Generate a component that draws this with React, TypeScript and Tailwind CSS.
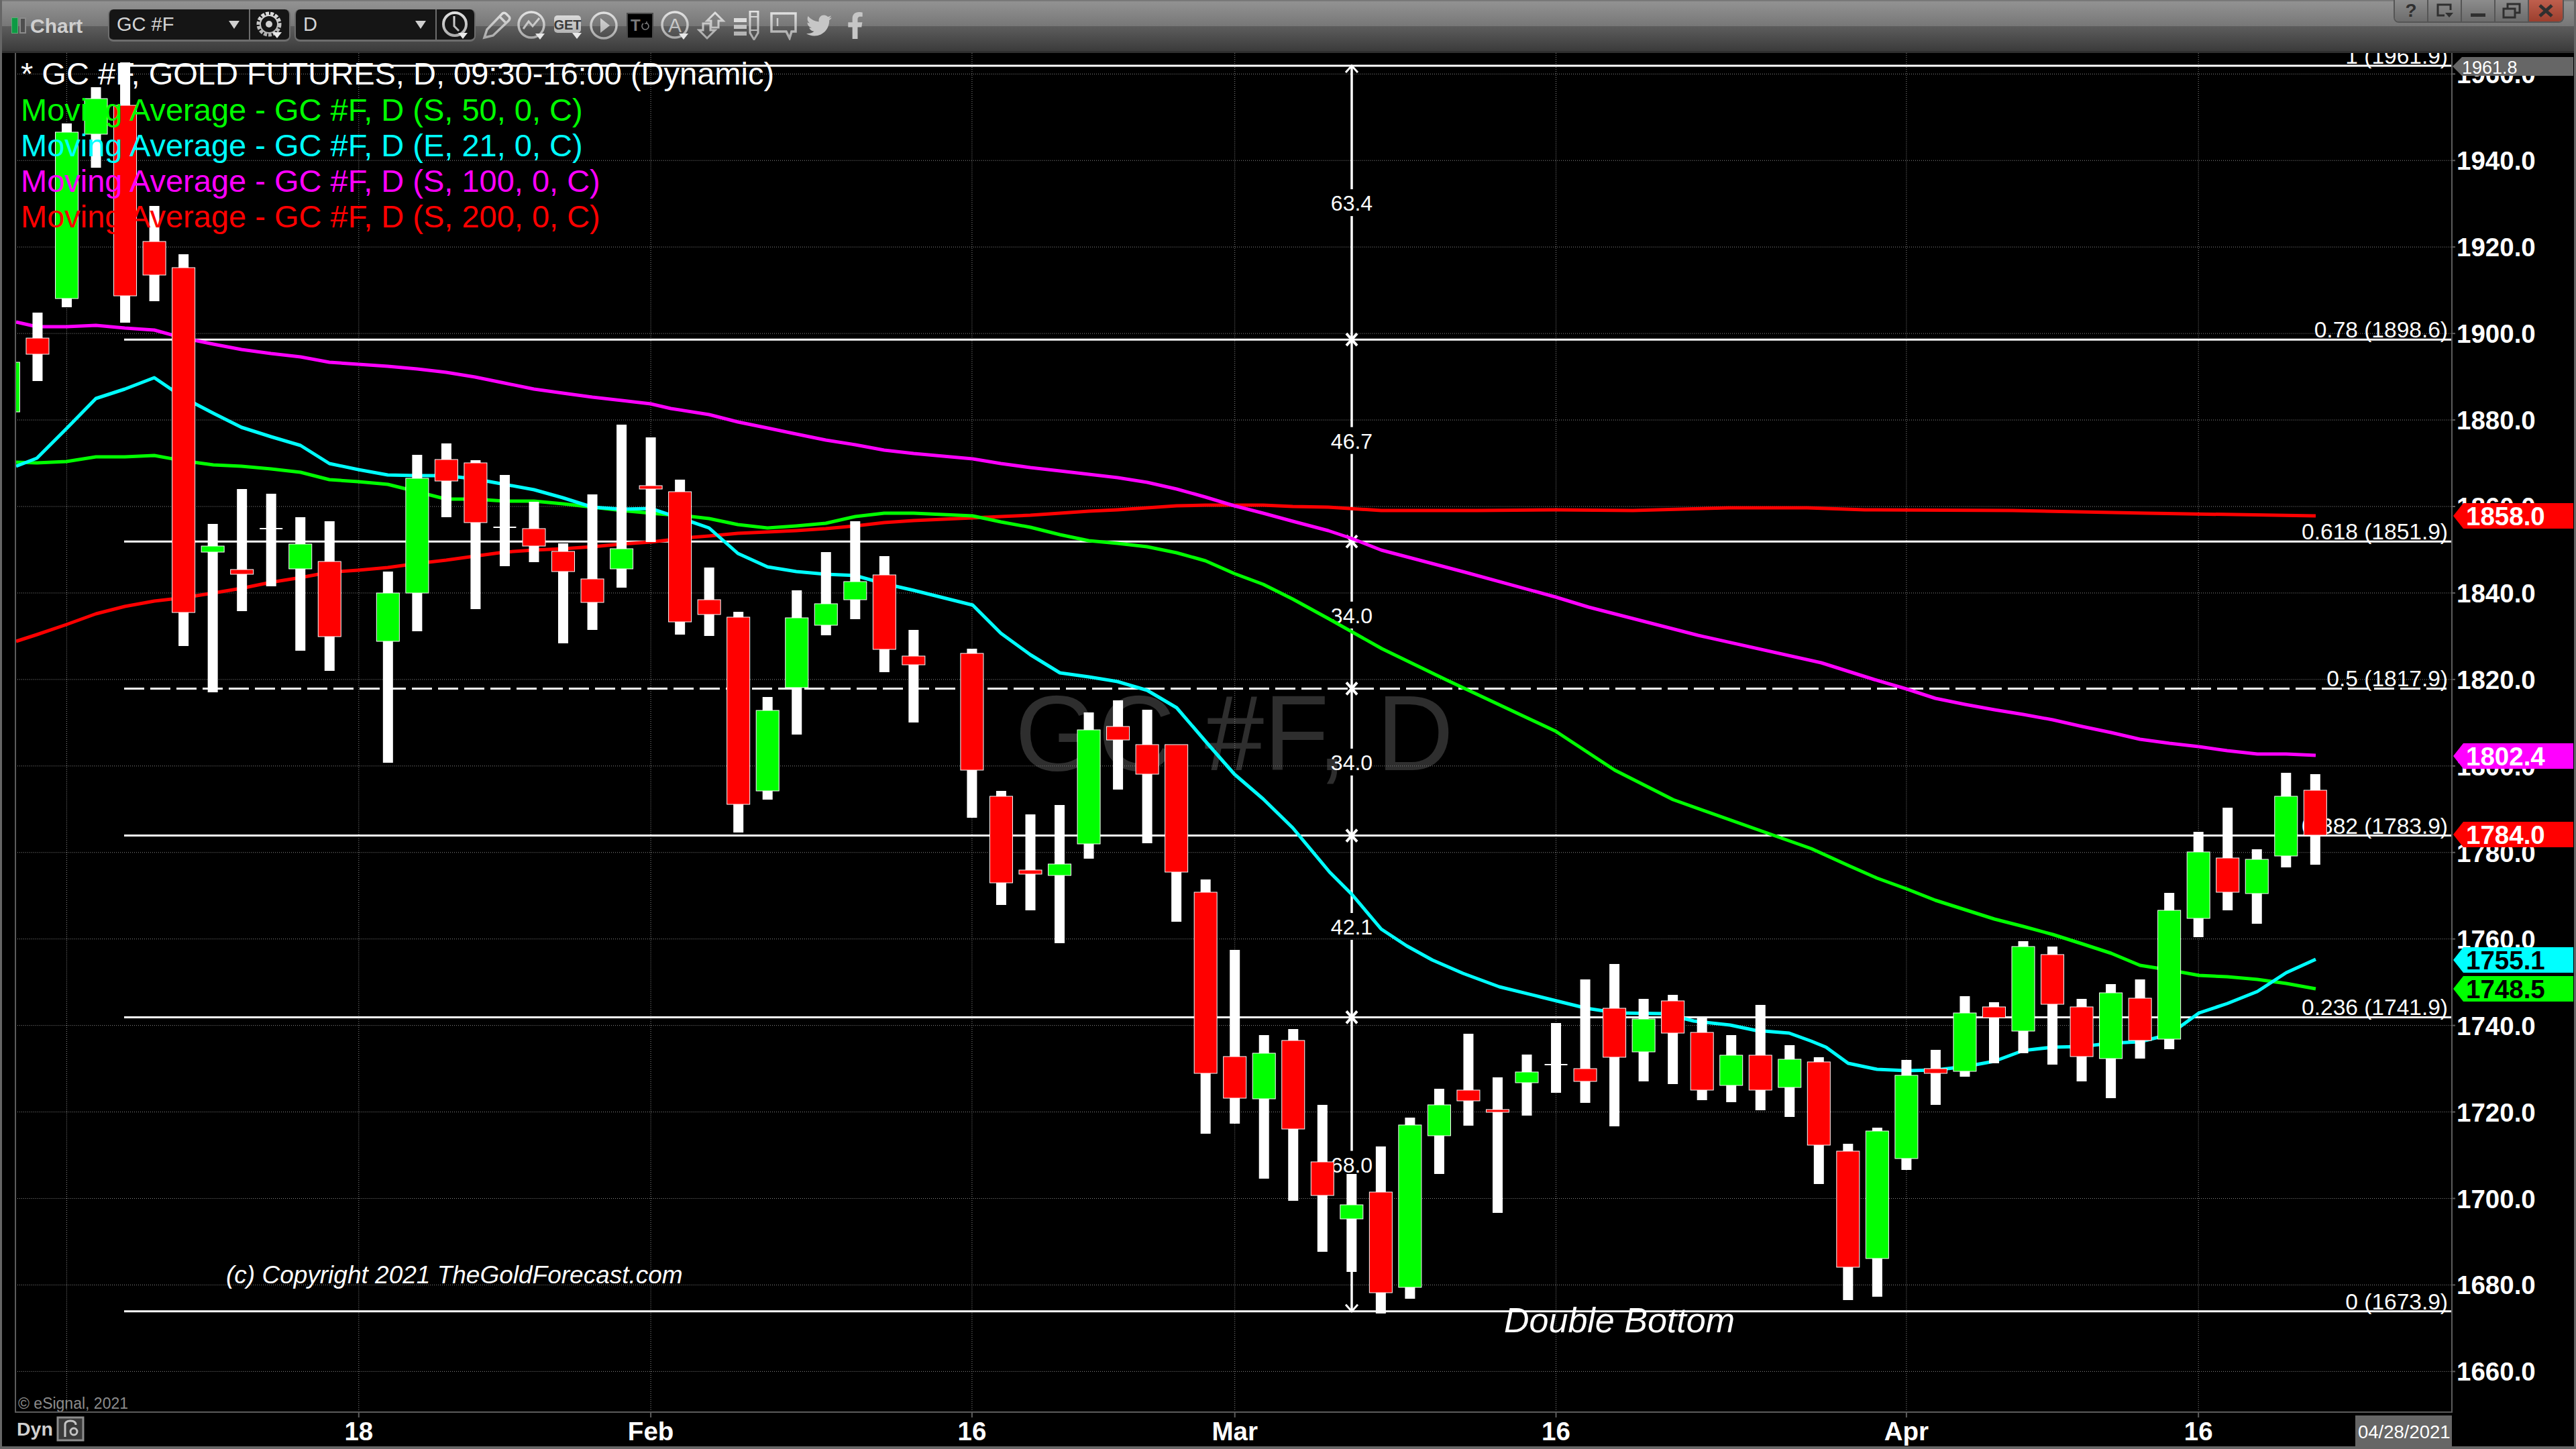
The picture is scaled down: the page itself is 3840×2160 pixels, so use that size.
import { FaFacebookF, FaTwitter } from "react-icons/fa";

// price / bar index to screen pixels (the svg viewBox below is in page coordinates)
const yOf = (p: number) => 110.3 + (1960 - p) * 6.447;
const xOf = (k: number) => 99.5 + 43.53 * k;

const PLOT = { left: 23, right: 3655, top: 79, bottom: 2105 };
const FIB_X = 2015;

type Bar = [number, number, number, number, number, "r" | "g" | "d"];

// k, high, body top, body bottom, low, kind (pixels)
const bars: Bar[] = [
  [-2, 520, 540, 614, 640, "g"],
  [-1, 466, 504, 528, 568, "r"],
  [0, 184, 197, 445, 458, "g"],
  [1, 130, 147, 200, 250, "g"],
  [2, 93, 157, 441, 481, "r"],
  [3, 307, 360, 410, 449, "r"],
  [4, 379, 399, 913, 963, "r"],
  [5, 781, 814, 823, 1032, "g"],
  [6, 729, 849, 856, 911, "r"],
  [7, 736, 788, 788, 874, "d"],
  [8, 771, 811, 848, 970, "g"],
  [9, 777, 837, 949, 1000, "r"],
  [11, 852, 884, 956, 1137, "g"],
  [12, 678, 713, 884, 941, "g"],
  [13, 661, 685, 717, 771, "r"],
  [14, 686, 690, 779, 908, "r"],
  [15, 708, 786, 786, 844, "d"],
  [16, 748, 788, 814, 838, "r"],
  [17, 810, 822, 852, 959, "r"],
  [18, 737, 863, 898, 939, "r"],
  [19, 633, 818, 848, 876, "g"],
  [20, 652, 724, 729, 808, "r"],
  [21, 715, 733, 927, 946, "r"],
  [22, 846, 894, 916, 948, "r"],
  [23, 912, 920, 1199, 1241, "r"],
  [24, 1039, 1059, 1179, 1192, "g"],
  [25, 880, 921, 1025, 1095, "g"],
  [26, 823, 900, 932, 947, "g"],
  [27, 777, 867, 894, 923, "g"],
  [28, 829, 857, 968, 1002, "r"],
  [29, 939, 978, 991, 1077, "r"],
  [31, 967, 974, 1148, 1219, "r"],
  [32, 1179, 1187, 1316, 1349, "r"],
  [33, 1214, 1297, 1303, 1357, "r"],
  [34, 1200, 1288, 1305, 1406, "g"],
  [35, 1062, 1088, 1258, 1280, "g"],
  [36, 1044, 1083, 1103, 1177, "r"],
  [37, 1058, 1110, 1154, 1257, "r"],
  [38, 1110, 1110, 1300, 1374, "r"],
  [39, 1311, 1330, 1600, 1690, "r"],
  [40, 1416, 1575, 1637, 1675, "r"],
  [41, 1543, 1570, 1638, 1757, "g"],
  [42, 1534, 1551, 1683, 1790, "r"],
  [43, 1647, 1732, 1782, 1866, "r"],
  [44, 1750, 1796, 1817, 1896, "g"],
  [45, 1709, 1777, 1927, 1958, "r"],
  [46, 1666, 1677, 1919, 1936, "g"],
  [47, 1623, 1647, 1693, 1750, "g"],
  [48, 1541, 1625, 1641, 1678, "r"],
  [49, 1606, 1654, 1658, 1808, "r"],
  [50, 1572, 1598, 1614, 1663, "g"],
  [51, 1525, 1587, 1587, 1629, "d"],
  [52, 1460, 1593, 1612, 1644, "r"],
  [53, 1437, 1503, 1576, 1679, "r"],
  [54, 1489, 1519, 1568, 1612, "g"],
  [55, 1483, 1492, 1540, 1616, "r"],
  [56, 1517, 1539, 1625, 1640, "r"],
  [57, 1543, 1573, 1618, 1643, "g"],
  [58, 1498, 1573, 1625, 1655, "r"],
  [59, 1558, 1579, 1621, 1665, "g"],
  [60, 1576, 1583, 1707, 1765, "r"],
  [61, 1705, 1716, 1889, 1938, "r"],
  [62, 1681, 1686, 1876, 1933, "g"],
  [63, 1580, 1603, 1727, 1744, "g"],
  [64, 1565, 1593, 1600, 1647, "r"],
  [65, 1485, 1510, 1597, 1605, "g"],
  [66, 1494, 1501, 1517, 1585, "r"],
  [67, 1403, 1411, 1537, 1570, "g"],
  [68, 1411, 1423, 1497, 1587, "r"],
  [69, 1489, 1501, 1575, 1612, "r"],
  [70, 1467, 1480, 1578, 1637, "g"],
  [71, 1460, 1488, 1551, 1578, "r"],
  [72, 1331, 1357, 1549, 1564, "g"],
  [73, 1240, 1270, 1369, 1397, "g"],
  [74, 1204, 1279, 1330, 1357, "r"],
  [75, 1266, 1281, 1332, 1377, "g"],
  [76, 1152, 1187, 1276, 1293, "g"],
  [77, 1154, 1178, 1245, 1289, "r"],
];

const magentaLine =
  "24,480 55,487 99,487 143,485 186,489 230,492 274,504 318,513 360,521 404,527 448,532 491,540 534,543 578,546 622,550 665,555 708,562 752,571 796,580 839,586 883,592 927,597 970,602 1000,609 1057,618 1100,629 1144,638 1187,647 1231,656 1275,663 1318,671 1362,676 1406,680 1450,684 1492,691 1536,697 1580,702 1623,707 1666,712 1710,719 1754,729 1797,741 1840,754 1883,765 1927,777 1980,791 2016,803 2059,820 2184,853 2319,890 2368,905 2531,947 2715,988 2794,1013 2842,1027 2885,1041 2929,1050 2973,1058 3016,1065 3060,1073 3104,1083 3147,1092 3190,1102 3234,1108 3278,1113 3320,1119 3365,1124 3408,1124 3452,1126";
const redLine =
  "24,956 55,946 99,931 143,915 186,904 230,896 274,891 318,884 360,877 404,868 448,861 491,853 534,850 578,846 622,840 665,835 708,829 752,823 796,820 839,818 883,815 927,811 970,808 1031,801 1057,799 1100,795 1144,793 1187,791 1231,788 1275,784 1318,779 1362,776 1406,774 1450,772 1492,770 1536,768 1580,765 1623,762 1666,760 1710,757 1754,754 1797,753 1883,753 1927,755 1980,756 2059,761 2202,761 2319,760 2434,761 2577,757 2694,757 2780,760 3000,761 3200,765 3452,769";
const greenLine =
  "24,689 55,690 99,688 143,681 186,681 230,679 274,687 318,693 360,695 404,699 448,704 491,715 534,718 578,722 622,733 665,744 708,744 752,747 796,747 839,751 883,756 927,761 970,765 1031,770 1057,773 1100,782 1144,787 1187,784 1231,780 1275,770 1318,765 1362,765 1406,767 1450,769 1492,778 1536,786 1580,797 1623,806 1666,810 1710,815 1754,824 1797,836 1840,855 1883,871 1927,893 1980,922 2060,967 2155,1013 2319,1090 2407,1148 2494,1192 2649,1247 2700,1265 2755,1290 2798,1309 2842,1325 2885,1342 2929,1356 2973,1370 3016,1381 3060,1393 3104,1407 3147,1421 3190,1439 3234,1446 3278,1454 3320,1456 3365,1460 3408,1466 3452,1474";
const cyanLine =
  "24,695 55,683 99,639 143,594 186,580 230,563 274,593 318,616 360,637 404,651 448,664 491,691 534,700 578,708 622,709 665,709 708,714 752,722 796,730 839,742 883,756 927,759 970,758 1031,778 1057,787 1100,825 1144,845 1187,852 1231,856 1275,858 1318,870 1362,880 1406,891 1450,902 1492,944 1536,976 1580,1003 1623,1009 1666,1016 1710,1029 1754,1055 1797,1105 1840,1154 1883,1191 1927,1234 1982,1300 2015,1333 2059,1385 2097,1410 2135,1431 2181,1451 2235,1471 2296,1486 2365,1503 2411,1510 2480,1511 2525,1522 2579,1528 2617,1536 2667,1540 2700,1552 2722,1561 2755,1585 2798,1594 2842,1596 2885,1595 2929,1590 2973,1582 3016,1566 3060,1561 3104,1560 3147,1555 3190,1553 3234,1542 3278,1510 3320,1496 3365,1478 3408,1450 3452,1430";

const fibLevels = [
  { label: "1 (1961.9)", price: 1961.9 },
  { label: "0.78 (1898.6)", price: 1898.6 },
  { label: "0.618 (1851.9)", price: 1851.9 },
  { label: "0.5 (1817.9)", price: 1817.9, dashed: true },
  { label: "0.382 (1783.9)", price: 1783.9 },
  { label: "0.236 (1741.9)", price: 1741.9 },
  { label: "0 (1673.9)", price: 1673.9 },
];

const fibSpans = ["63.4", "46.7", "34.0", "34.0", "42.1", "68.0"];

const dateTicks = [
  { k: 10, label: "18" },
  { k: 20, label: "Feb" },
  { k: 31, label: "16" },
  { k: 40, label: "Mar" },
  { k: 51, label: "16" },
  { k: 63, label: "Apr" },
  { k: 73, label: "16" },
];

const priceTicks = Array.from({ length: 16 }, (_, i) => 1960 - i * 20);

const legend = [
  { text: "Moving Average - GC #F, D (S, 50, 0, C)", y: 180, className: "fill-[#00ff00]" },
  { text: "Moving Average - GC #F, D (E, 21, 0, C)", y: 233, className: "fill-[#00ffff]" },
  { text: "Moving Average - GC #F, D (S, 100, 0, C)", y: 286, className: "fill-[#ff00ff]" },
  { text: "Moving Average - GC #F, D (S, 200, 0, C)", y: 339, className: "fill-[#ff0000]" },
];

const tags = [
  { text: "1858.0", cy: 769, bg: "fill-[#ff0000]", fg: "fill-white" },
  { text: "1802.4", cy: 1127, bg: "fill-[#ff00ff]", fg: "fill-white" },
  { text: "1784.0", cy: 1244, bg: "fill-[#ff0000]", fg: "fill-white" },
  { text: "1755.1", cy: 1431, bg: "fill-[#00ffff]", fg: "fill-black" },
  { text: "1748.5", cy: 1474, bg: "fill-[#00ff00]", fg: "fill-black" },
];

function Candle({ bar }: { bar: Bar }) {
  const [k, high, top, bottom, low, kind] = bar;
  const x = xOf(k);
  return (
    <g>
      <rect x={x - 7.5} y={high} width={15} height={low - high} fill="#fff" />
      {kind === "d" ? (
        <rect x={x - 17} y={top - 1} width={34} height={2} fill="#fff" />
      ) : (
        <rect
          x={x - 17}
          y={top}
          width={34}
          height={bottom - top}
          fill={kind === "r" ? "#ff0000" : "#00ff00"}
          stroke="#fff"
          strokeWidth={1}
        />
      )}
    </g>
  );
}

function Chart() {
  const levelYs = fibLevels.map(l => yOf(l.price));
  return (
    <svg width={3834} height={2077} viewBox="3 79 3834 2077" className="block">
      <defs>
        <clipPath id="plot">
          <rect x={PLOT.left} y={PLOT.top} width={PLOT.right - PLOT.left} height={PLOT.bottom - PLOT.top} />
        </clipPath>
      </defs>

      <g clipPath="url(#plot)">
        <text x={1513} y={1148} className="fill-[#2e2e2e] text-[159px]">GC #F, D</text>

        {/* grid */}
        {priceTicks.map(p => (
          <line key={p} x1={PLOT.left} x2={PLOT.right} y1={yOf(p)} y2={yOf(p)} stroke="#8a8a8a" strokeDasharray="1 2" />
        ))}
        {[{ k: 0 }, ...dateTicks].map(t => (
          <line key={t.k} x1={xOf(t.k)} x2={xOf(t.k)} y1={PLOT.top} y2={PLOT.bottom} stroke="#8a8a8a" strokeDasharray="1 2" />
        ))}

        {/* fibonacci retracement */}
        {fibLevels.map((l, i) => (
          <g key={l.label}>
            <line x1={185} x2={PLOT.right} y1={levelYs[i]} y2={levelYs[i]} stroke="#fff" strokeWidth={3} strokeDasharray={l.dashed ? "30 9" : undefined} />
            <text x={3649} y={levelYs[i] - 3} textAnchor="end" className="fill-white text-[33.5px]">{l.label}</text>
          </g>
        ))}
        {fibSpans.map((label, i) => {
          const from = levelYs[i];
          const to = levelYs[i + 1];
          const mid = (from + to) / 2;
          return (
            <g key={i}>
              <line x1={FIB_X} x2={FIB_X} y1={from} y2={mid - 20} stroke="#fff" strokeWidth={3.5} />
              <line x1={FIB_X} x2={FIB_X} y1={mid + 20} y2={to} stroke="#fff" strokeWidth={3.5} />
              <text x={FIB_X} y={mid + 12} textAnchor="middle" className="fill-white text-[32px]">{label}</text>
            </g>
          );
        })}
        {levelYs.slice(1, -1).map(y => (
          <path key={y} d={`M${FIB_X - 8} ${y - 9}L${FIB_X + 8} ${y + 9}M${FIB_X + 8} ${y - 9}L${FIB_X - 8} ${y + 9}`} stroke="#fff" strokeWidth={4} />
        ))}
        <path d={`M${FIB_X - 9} ${levelYs[0] + 10}L${FIB_X} ${levelYs[0]}L${FIB_X + 9} ${levelYs[0] + 10}`} stroke="#fff" strokeWidth={3} fill="none" />
        <path d={`M${FIB_X - 9} ${levelYs[6] - 10}L${FIB_X} ${levelYs[6]}L${FIB_X + 9} ${levelYs[6] - 10}`} stroke="#fff" strokeWidth={3} fill="none" />

        {/* moving averages */}
        <polyline points={redLine} fill="none" stroke="#ff0000" strokeWidth={5} strokeLinejoin="round" />
        <polyline points={magentaLine} fill="none" stroke="#ff00ff" strokeWidth={5} strokeLinejoin="round" />
        <polyline points={greenLine} fill="none" stroke="#00ff00" strokeWidth={5} strokeLinejoin="round" />
        <polyline points={cyanLine} fill="none" stroke="#00ffff" strokeWidth={5} strokeLinejoin="round" />

        {bars.map(bar => (
          <Candle key={bar[0]} bar={bar} />
        ))}

        {/* chart titles sit over the bars */}
        <text x={31} y={126} className="fill-white text-[47px]">* GC #F, GOLD FUTURES, D, 09:30-16:00 (Dynamic)</text>
        {legend.map(l => (
          <text key={l.y} x={31} y={l.y} className={`${l.className} text-[47px]`}>{l.text}</text>
        ))}
        <text x={337} y={1913} className="fill-white text-[37px] italic">(c) Copyright 2021 TheGoldForecast.com</text>
        <text x={2242} y={1986} className="fill-white text-[52px] italic">Double Bottom</text>
        <text x={27} y={2100} className="fill-[#8c8c8c] text-[23px]">© eSignal, 2021</text>
      </g>

      {/* axes */}
      <path d={`M${PLOT.left} ${PLOT.top}V${PLOT.bottom}H${PLOT.right}V${PLOT.top}`} fill="none" stroke="#5c5c5c" strokeWidth={2} />
      {priceTicks.map(p => (
        <g key={p}>
          <line x1={PLOT.right} x2={3660} y1={yOf(p)} y2={yOf(p)} stroke="#5c5c5c" strokeWidth={2} />
          <text x={3662} y={yOf(p) + 14} className="fill-white text-[38.5px] font-bold">{p.toFixed(1)}</text>
        </g>
      ))}
      {dateTicks.map(t => (
        <g key={t.k}>
          <line x1={xOf(t.k)} x2={xOf(t.k)} y1={PLOT.bottom} y2={2113} stroke="#5c5c5c" strokeWidth={2} />
          <text x={xOf(t.k)} y={2147} textAnchor="middle" className="fill-white text-[38.5px] font-bold">{t.label}</text>
        </g>
      ))}

      {/* last value tags */}
      <polygon points="3656,99 3670,85 3836,85 3836,113 3670,113" fill="#666" />
      <text x={3670} y={110} className="fill-white text-[27px]">1961.8</text>
      {tags.map(t => (
        <g key={t.text}>
          <polygon points={`3657,${t.cy} 3672,${t.cy - 19} 3836,${t.cy - 19} 3836,${t.cy + 19} 3672,${t.cy + 19}`} className={t.bg} />
          <text x={3676} y={t.cy + 14} className={`${t.fg} text-[38.5px] font-bold`}>{t.text}</text>
        </g>
      ))}

      {/* bottom strip */}
      <text x={25} y={2140} className="fill-[#d0d0d0] text-[28.5px] font-bold">Dyn</text>
      <rect x={86} y={2113} width={38} height={34} fill="#3a3a3a" stroke="#8c8c8c" strokeWidth={3} />
      <path d="M97 2142V2124Q97 2118 105 2118Q113 2118 113 2124" fill="none" stroke="#c4c4c4" strokeWidth={3} />
      <circle cx={110} cy={2134} r={5} fill="none" stroke="#c4c4c4" strokeWidth={3} />
      <rect x={3511} y={2110} width={144} height={46} fill="#666" />
      <text x={3515} y={2144} className="fill-white text-[27.5px]">04/28/2021</text>
    </svg>
  );
}

function Caret({ x, y }: { x: number; y: number }) {
  return <polygon points={`${x - 7},${y} ${x + 7},${y} ${x},${y + 9}`} fill="#e8e8e8" stroke="none" />;
}

const ICON_STROKE = "url(#toolIcon)";

function ToolIcon({ children }: { children: React.ReactNode }) {
  return (
    <div className="flex h-[44px] w-[53.5px] shrink-0 items-center justify-center">
      <svg width={44} height={44} viewBox="0 0 44 44" fill="none" stroke={ICON_STROKE} strokeWidth={3.5}>
        {children}
      </svg>
    </div>
  );
}

function Toolbar() {
  return (
    <header className="flex h-[79px] shrink-0 items-center border-b-[3px] border-[#2f2f2f] bg-[linear-gradient(to_bottom,#6e6e6e_0,#929292_3px,#777777_39px,#5d5d5d_39px,#3b3b3b_76px)] pl-[14px]">
      <svg width={0} height={0} className="absolute">
        <defs>
          <linearGradient id="toolIcon" gradientUnits="userSpaceOnUse" x1="0" y1="0" x2="0" y2="44">
            <stop offset="0" stopColor="#e4e4e4" />
            <stop offset="1" stopColor="#a4a4a4" />
          </linearGradient>
        </defs>
      </svg>

      <div className="flex h-[24px] w-[22px] gap-[2px]">
        <div className="w-[10px] border border-[#5fae76] bg-[#0d9a44]" />
        <div className="w-[10px] border-2 border-[#8a8a8a] bg-[#4e4e4e]" />
      </div>
      <span className="ml-[6px] w-[116px] text-[30px] font-bold text-[#cfcfcf]">Chart</span>

      <div className="flex h-[48px] w-[272px] rounded-[8px] border-x-2 border-b-[3px] border-[#6d6d6d] border-t-0 bg-[#151515]">
        <div className="flex w-[210px] items-center justify-between border-r-2 border-[#6d6d6d] pl-[11px] pr-[14px]">
          <span className="text-[29px] text-[#d4d4d4]">GC #F</span>
          <svg width={16} height={12}><polygon points="0,0 16,0 8,12" fill="#cfcfcf" /></svg>
        </div>
        <div className="flex flex-1 items-center justify-center">
          <svg width={44} height={44} viewBox="0 0 44 44" fill="none" stroke={ICON_STROKE}>
            <circle cx={21} cy={21} r={16} strokeWidth={5} strokeDasharray="5 2" />
            <circle cx={21} cy={21} r={13} strokeWidth={2} />
            <circle cx={21} cy={21} r={5} fill="#d0d0d0" stroke="none" />
            <Caret x={33} y={33} />
          </svg>
        </div>
      </div>

      <div className="ml-[6px] flex h-[48px] w-[270px] rounded-[8px] border-x-2 border-b-[3px] border-[#6d6d6d] border-t-0 bg-[#151515]">
        <div className="flex w-[210px] items-center justify-between border-r-2 border-[#6d6d6d] pl-[11px] pr-[14px]">
          <span className="text-[29px] text-[#d4d4d4]">D</span>
          <svg width={16} height={12}><polygon points="0,0 16,0 8,12" fill="#cfcfcf" /></svg>
        </div>
        <div className="flex flex-1 items-center justify-center">
          <svg width={44} height={44} viewBox="0 0 44 44" fill="none" stroke={ICON_STROKE} strokeWidth={4}>
            <circle cx={21} cy={21} r={17} />
            <path d="M20 9V24L27 31" strokeWidth={3} />
            <Caret x={33} y={34} />
          </svg>
        </div>
      </div>

      <div className="ml-[4px] flex items-center">
        <ToolIcon>
          <path d="M4 40L8 28L31 4Q34 2 37 5L41 9Q43 12 40 15L17 37Z" />
          <path d="M27 9L37 19" />
        </ToolIcon>
        <ToolIcon>
          <circle cx={21} cy={21} r={19} />
          <path d="M9 27L17 16L23 23L33 11" strokeWidth={3} />
          <Caret x={34} y={34} />
        </ToolIcon>
        <ToolIcon>
          <rect x={1} y={7} width={40} height={26} rx={5} fill={ICON_STROKE} stroke="none" />
          <text x={21} y={28} textAnchor="middle" fontSize={20} fontWeight={700} fill="#3a3a3a" stroke="none">GET</text>
          <Caret x={35} y={33} />
        </ToolIcon>
        <ToolIcon>
          <circle cx={22} cy={22} r={19} />
          <polygon points="17,11 31,22 17,33" fill={ICON_STROKE} stroke="none" />
        </ToolIcon>
        <div className="flex h-[44px] w-[53.5px] shrink-0 items-center justify-center">
          <div className="flex h-[35px] w-[36px] items-center justify-center gap-[1px] bg-black shadow-[0_0_0_2px_#4a4a4a]">
            <span className="text-[24px] font-bold leading-none text-[#7a7a7a]">T</span>
            <svg width={12} height={14} viewBox="0 0 12 14" fill="none" stroke="#7a7a7a" strokeWidth={1.6}>
              <path d="M3 4A5 5 0 1 0 8 3.500M8 1V4H5" />
            </svg>
          </div>
        </div>
        <ToolIcon>
          <circle cx={21} cy={21} r={19} />
          <text x={21} y={32} textAnchor="middle" fontSize={30} fill={ICON_STROKE} stroke="none">A</text>
          <Caret x={34} y={34} />
        </ToolIcon>
        <ToolIcon>
          <polygon points="27,3 39,15 32,15 32,25 21,25 21,15 15,15" strokeWidth={3} />
          <polygon points="15,41 3,29 9,29 9,19 20,19 20,29 27,29" strokeWidth={3} />
        </ToolIcon>
        <ToolIcon>
          <rect x={2} y={11} width={19} height={6} fill="#dcdcdc" stroke="none" />
          <rect x={2} y={21} width={19} height={6} fill="#c4c4c4" stroke="none" />
          <rect x={2} y={31} width={19} height={6} fill="#b4b4b4" stroke="none" />
          <path d="M26 1H38V33L32 43L26 33Z" strokeWidth={3} />
          <path d="M26 9H38M26 29H38" strokeWidth={2} />
        </ToolIcon>
        <ToolIcon>
          <path d="M4 4H40V31H34L31 41L26 31H4Z" />
          <path d="M13 11V23" strokeWidth={2.500} />
        </ToolIcon>
        <div className="flex h-[44px] w-[53.5px] shrink-0 items-center justify-center text-[#c6c6c6]">
          <FaTwitter size={38} />
        </div>
        <div className="flex h-[44px] w-[53.5px] shrink-0 items-center justify-center text-[#c6c6c6]">
          <FaFacebookF size={40} />
        </div>
      </div>

      <div className="ml-auto mr-[15px] flex h-[34px] self-start overflow-hidden rounded-b-[8px] border-x-2 border-b-2 border-[#555]">
        <div className="flex w-[50px] items-center justify-center border-r-2 border-[#555] bg-[linear-gradient(to_bottom,#8c8c8c,#6c6c6c)] text-[28px] font-bold text-[#2f2f2f]">?</div>
        <div className="flex w-[50px] items-center justify-center border-r-2 border-[#555] bg-[linear-gradient(to_bottom,#8c8c8c,#6c6c6c)]">
          <svg width={26} height={24} viewBox="0 0 26 24" fill="none" stroke="#2f2f2f" strokeWidth={3}>
            <path d="M22 11V3H3V19H13" />
            <polygon points="14,15 26,15 20,22" fill="#2f2f2f" stroke="none" />
          </svg>
        </div>
        <div className="flex w-[50px] items-end justify-center border-r-2 border-[#555] bg-[linear-gradient(to_bottom,#8c8c8c,#6c6c6c)] pb-[7px]">
          <div className="h-[5px] w-[22px] bg-[#2f2f2f]" />
        </div>
        <div className="flex w-[50px] items-center justify-center border-r-2 border-[#555] bg-[linear-gradient(to_bottom,#8c8c8c,#6c6c6c)]">
          <svg width={28} height={24} viewBox="0 0 28 24" fill="none" stroke="#2f2f2f" strokeWidth={3}>
            <rect x={2} y={9} width={17} height={13} />
            <path d="M8 8V2H26V15H20" />
          </svg>
        </div>
        <div className="flex w-[50px] items-center justify-center bg-[linear-gradient(to_bottom,#bf5f4d,#9c3f2e)]">
          <svg width={24} height={20} viewBox="0 0 24 20" stroke="#2f2f2f" strokeWidth={5}>
            <path d="M3 2L21 18M21 2L3 18" />
          </svg>
        </div>
      </div>
    </header>
  );
}

export default function App() {
  return (
    <div className="flex h-[2160px] w-[3840px] flex-col overflow-hidden border-x-[3px] border-b-[4px] border-[#666] bg-black font-['Liberation_Sans',Arial,sans-serif]">
      <Toolbar />
      <Chart />
    </div>
  );
}
